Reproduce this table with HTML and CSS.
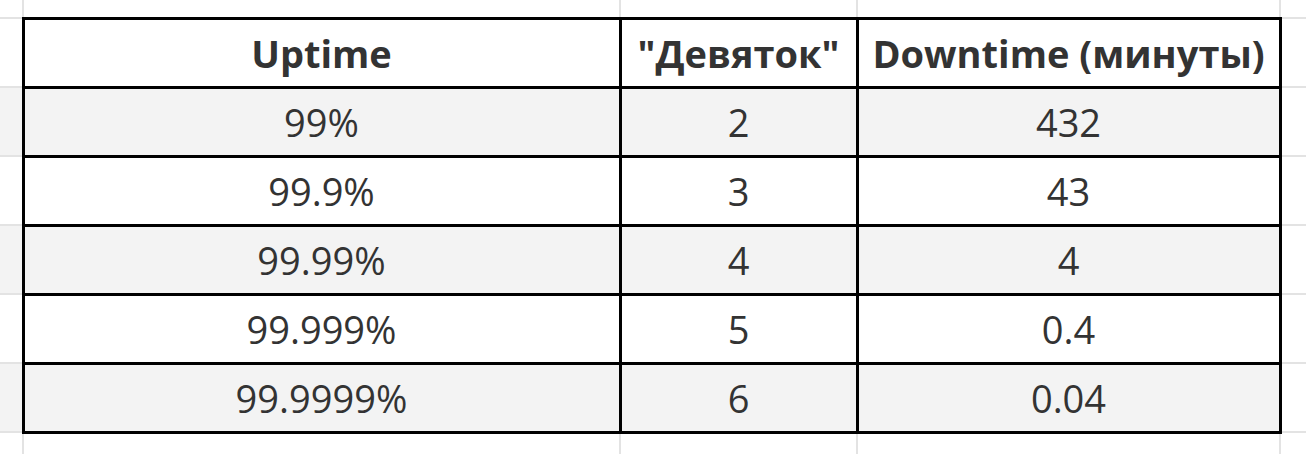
FILE: index.html
```html
<!DOCTYPE html>
<html lang="ru">
<head>
<meta charset="utf-8">
<title>Uptime</title>
<link rel="stylesheet" href="styles.css">
</head>
<body>
<table class="sheet">
  <colgroup>
    <col class="col-a"><col class="col-b"><col class="col-c"><col class="col-d"><col class="col-e">
  </colgroup>
  <tr class="row-top">
    <td class="edge-l"></td><td></td><td></td><td></td><td class="edge-r"></td>
  </tr>
  <tr class="row">
    <td class="edge-l"></td>
    <th class="cell head">Uptime</th>
    <th class="cell head">"Девяток"</th>
    <th class="cell head">Downtime (минуты)</th>
    <td class="edge-r"></td>
  </tr>
  <tr class="row band">
    <td class="edge-l"></td>
    <td class="cell">99%</td><td class="cell">2</td><td class="cell">432</td>
    <td class="edge-r"></td>
  </tr>
  <tr class="row">
    <td class="edge-l"></td>
    <td class="cell">99.9%</td><td class="cell">3</td><td class="cell">43</td>
    <td class="edge-r"></td>
  </tr>
  <tr class="row band">
    <td class="edge-l"></td>
    <td class="cell">99.99%</td><td class="cell">4</td><td class="cell">4</td>
    <td class="edge-r"></td>
  </tr>
  <tr class="row">
    <td class="edge-l"></td>
    <td class="cell">99.999%</td><td class="cell">5</td><td class="cell">0.4</td>
    <td class="edge-r"></td>
  </tr>
  <tr class="row band">
    <td class="edge-l"></td>
    <td class="cell">99.9999%</td><td class="cell">6</td><td class="cell">0.04</td>
    <td class="edge-r"></td>
  </tr>
  <tr class="row-bottom">
    <td class="edge-l"></td><td></td><td></td><td></td><td class="edge-r"></td>
  </tr>
</table>
</body>
</html>
```

FILE: styles.css
```css
html, body {
  margin: 0;
  padding: 0;
  background: #ffffff;
}

body {
  width: 1306px;
  height: 454px;
  overflow: hidden;
}

.sheet {
  border-collapse: collapse;
  table-layout: fixed;
  width: 1306px;
  font-family: "Open Sans", "Liberation Sans", sans-serif;
  font-size: 38px;
  color: #333333;
}

.col-a { width: 23px; }
.col-b { width: 597px; }
.col-c { width: 237px; }
.col-d { width: 423px; }
.col-e { width: 26px; }

.sheet td,
.sheet th {
  border: 2px solid #e3e3e3;
  padding: 0;
  text-align: center;
  vertical-align: middle;
  white-space: nowrap;
}

.sheet .edge-l { border-left: none; }
.sheet .edge-r { border-right: none; }
.row-top td { border-top: none; }
.row-bottom td { border-bottom: none; }

.row-top { height: 18px; }
.row { height: 69px; }
.row-bottom { height: 22px; }

.sheet .cell {
  border: 3px solid #000000;
  line-height: 1;
}

.head {
  font-weight: 700;
}

.band .cell,
.band .edge-l {
  background: #f3f3f3;
}
```
